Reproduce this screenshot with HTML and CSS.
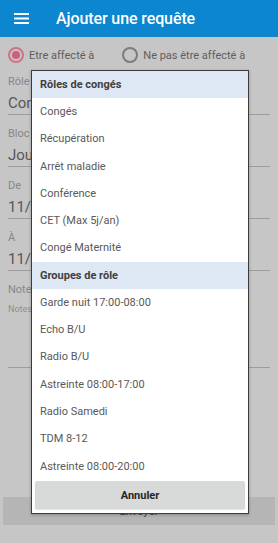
FILE: index.html
```html
<!DOCTYPE html>
<html lang="fr">
<head>
<meta charset="utf-8">
<title>Ajouter une requête</title>
<link rel="stylesheet" href="styles.css">
</head>
<body>
<div class="screen">
  <header class="appbar">
    <svg class="menu" width="15" height="11" viewBox="0 0 15 11" aria-hidden="true">
      <rect x="0" y="0" width="15" height="2" fill="#fff"/>
      <rect x="0" y="4.5" width="15" height="2" fill="#fff"/>
      <rect x="0" y="9" width="15" height="2" fill="#fff"/>
    </svg>
    <h1 class="title">Ajouter une requête</h1>
  </header>

  <div class="radios">
    <label class="radio">
      <span class="dot on"></span>
      <span class="radio-text">Etre affecté à</span>
    </label>
    <label class="radio second">
      <span class="dot"></span>
      <span class="radio-text">Ne pas être affecté à</span>
    </label>
  </div>

  <div class="field first">
    <div class="label">Rôle</div>
    <div class="value">Congés</div>
  </div>
  <div class="field">
    <div class="label">Bloc</div>
    <div class="value">Journée</div>
  </div>
  <div class="field">
    <div class="label">De</div>
    <div class="value">11/06/2019</div>
  </div>
  <div class="field">
    <div class="label">À</div>
    <div class="value">11/06/2019</div>
  </div>
  <div class="field notes">
    <div class="label">Notes</div>
    <div class="textarea">Notes</div>
  </div>

  <div class="send">Envoyer</div>

  <div class="dialog">
    <div class="list">
      <div class="group">Rôles de congés</div>
      <div class="item">Congés</div>
      <div class="item">Récupération</div>
      <div class="item">Arrêt maladie</div>
      <div class="item">Conférence</div>
      <div class="item">CET (Max 5j/an)</div>
      <div class="item">Congé Maternité</div>
      <div class="group">Groupes de rôle</div>
      <div class="item">Garde nuit 17:00-08:00</div>
      <div class="item">Echo B/U</div>
      <div class="item">Radio B/U</div>
      <div class="item">Astreinte 08:00-17:00</div>
      <div class="item">Radio Samedi</div>
      <div class="item">TDM 8-12</div>
      <div class="item">Astreinte 08:00-20:00</div>
    </div>
    <div class="cancel">Annuler</div>
  </div>
</div>
</body>
</html>
```

FILE: styles.css
```css
* { box-sizing: border-box; }

html, body {
  margin: 0;
  padding: 0;
}

body {
  width: 278px;
  height: 543px;
  overflow: hidden;
  background: #c6c6c6;
  font-family: Roboto, "Noto Sans", "Liberation Sans", sans-serif;
}

.screen {
  position: relative;
  width: 278px;
  height: 543px;
}

.appbar {
  height: 37px;
  background: #0b86cf;
  display: flex;
  align-items: center;
  padding-left: 14px;
}

.menu {
  display: block;
  flex: none;
}

.title {
  margin: 0 0 0 27px;
  font-size: 16px;
  font-weight: 500;
  color: #ffffff;
  line-height: 20px;
  letter-spacing: -0.1px;
}

.radios {
  height: 36px;
  display: flex;
  align-items: center;
  padding-left: 8px;
}

.radio {
  display: flex;
  align-items: center;
}

.radio.second {
  margin-left: 28px;
}

.dot {
  width: 16px;
  height: 16px;
  border-radius: 50%;
  border: 2px solid #7c7c7c;
  display: flex;
  align-items: center;
  justify-content: center;
  flex: none;
}

.dot.on {
  border-color: #d0728b;
}

.dot.on::after {
  content: "";
  width: 8px;
  height: 8px;
  border-radius: 50%;
  background: #cc5f7d;
}

.radio-text {
  margin-left: 5px;
  font-size: 11px;
  color: #5e5e5e;
}

.field {
  margin: 0 8px;
  padding-top: 11px;
  border-bottom: 1px solid #9c9c9c;
}

.field.first {
  padding-top: 1px;
}

.label {
  height: 16px;
  line-height: 16px;
  font-size: 11px;
  color: #878787;
}

.value {
  margin-top: 2px;
  height: 22px;
  line-height: 22px;
  font-size: 15px;
  color: #575757;
  white-space: nowrap;
}

.textarea {
  height: 69px;
  padding-top: 5px;
  font-size: 9px;
  line-height: 12px;
  color: #8e8e8e;
}

.send {
  margin: 129px 3px 0;
  height: 28px;
  background: #b5b5b5;
  color: #555555;
  font-size: 11px;
  font-weight: 500;
  display: flex;
  align-items: center;
  justify-content: center;
}

.dialog {
  position: absolute;
  left: 31px;
  top: 70px;
  width: 218px;
  height: 444px;
  background: #ffffff;
  border: 1px solid #3c3c3c;
  box-shadow: 0 1px 3px rgba(0, 0, 0, 0.25);
  display: flex;
  flex-direction: column;
}

.list {
  height: 410px;
  overflow: hidden;
}

.group {
  height: 27px;
  line-height: 27px;
  padding-left: 8px;
  background: #dde8f4;
  font-size: 11px;
  font-weight: 700;
  color: #404040;
}

.item {
  height: 27.3px;
  line-height: 27.3px;
  padding-left: 8px;
  font-size: 11px;
  color: #595959;
  white-space: nowrap;
}

.cancel {
  margin: 0 3px 4px;
  height: 28px;
  border-radius: 2px;
  background: #d8d9d9;
  box-shadow: 0 1px 1px rgba(0, 0, 0, 0.12);
  display: flex;
  align-items: center;
  justify-content: center;
  font-size: 11px;
  font-weight: 700;
  color: #262626;
}
```
